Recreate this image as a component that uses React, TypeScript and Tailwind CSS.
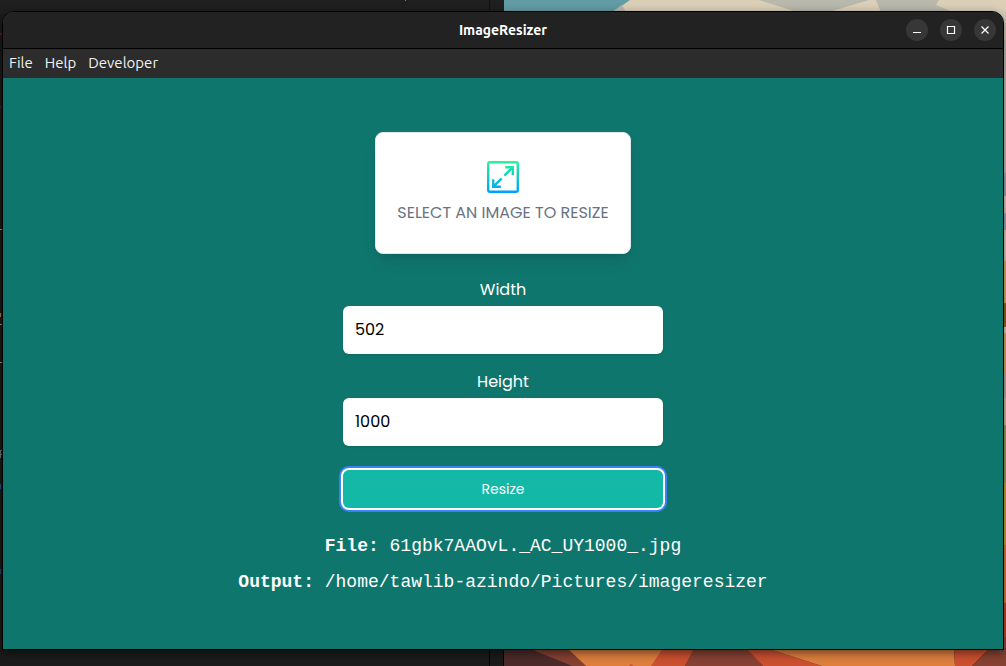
import { useState } from "react";

function Wallpaper() {
  return (
    <svg
      className="absolute inset-0 h-full w-full"
      viewBox="0 0 1006 666"
      preserveAspectRatio="none"
      aria-hidden="true"
    >
      <rect width="1006" height="666" fill="#1b1b1b" />
      <rect width="504" height="14" fill="#1f1f1f" />
      <rect x="481" width="1" height="14" fill="#1f1f1f" />
      <rect x="489" width="1" height="14" fill="#111111" />
      <rect x="405" width="1" height="1" fill="#777777" />
      <rect x="489" y="648" width="1" height="18" fill="#050505" />
      <g>
        <rect y="33" width="2" height="2" fill="#5c1c1c" />
        <rect y="106" width="2" height="2" fill="#3c1c20" />
        <rect y="229" width="2" height="1" fill="#b09078" />
        <rect y="313" width="1" height="4" fill="#c07038" />
        <rect y="324" width="2" height="1" fill="#b09078" />
        <rect y="362" width="2" height="1" fill="#b09078" />
        <path d="M0.5 450V458M0 450.5H2M0 454.5H2" stroke="#657465" />
        <rect y="484" width="1" height="5" fill="#25507c" />
        <rect y="569" width="1" height="5" fill="#1f4570" />
      </g>
      <rect x="504" width="502" height="40" fill="#dbcfb8" />
      <path d="M504 0H630L613 12H504Z" fill="#629ca5" />
      <path d="M622 5L626 12H612Z" fill="#b9b8ad" />
      <path d="M759 0H869L829 12H797Z" fill="#b9b8ad" />
      <path d="M876 0H939L936 5L953 12H881Z" fill="#b9b8ad" />
      <rect x="1003" y="40" width="3" height="133" fill="#c4c3b6" />
      <rect x="1003" y="173" width="3" height="23" fill="#9bb0b2" />
      <rect x="1003" y="196" width="3" height="17" fill="#dbcfb8" />
      <rect x="1003" y="213" width="3" height="17" fill="#9bb0b2" />
      <rect x="1003" y="230" width="3" height="31" fill="#dbcfb8" />
      <rect x="1003" y="261" width="3" height="42" fill="#d9b26a" />
      <rect x="1003" y="303" width="3" height="24" fill="#946524" />
      <rect x="1003" y="327" width="3" height="6" fill="#dbcfb8" />
      <rect x="1003" y="333" width="3" height="40" fill="#d9ab5c" />
      <rect x="1003" y="373" width="3" height="25" fill="#b8b09f" />
      <rect x="1003" y="398" width="3" height="27" fill="#d0c09f" />
      <rect x="1003" y="425" width="3" height="58" fill="#98a15c" />
      <rect x="1003" y="483" width="3" height="62" fill="#c9a32e" />
      <rect x="1003" y="545" width="3" height="58" fill="#de7a38" />
      <rect x="1003" y="603" width="3" height="34" fill="#c4442a" />
      <rect x="1003" y="637" width="3" height="29" fill="#964838" />
      <path d="M504 648H530L572 666H504Z" fill="#4c2a2a" />
      <path d="M528 648H568L586 666H572Z" fill="#864132" />
      <path d="M567 648H664L652 666H586Z" fill="#de7f3e" />
      <path d="M663 648H695L685 666H651Z" fill="#cb5030" />
      <path d="M629 666L631 664L634 666Z" fill="#cb5030" />
      <path d="M694 648H747L763 666H685Z" fill="#864132" />
      <path d="M746 648H766L822 666H763Z" fill="#cb5030" />
      <path d="M766 648H954L955 666H822Z" fill="#de7f3e" />
      <path d="M954 648H990L972 666H955Z" fill="#cb5030" />
      <path d="M990 648H1006V666H972Z" fill="#864132" />
      <rect x="503" y="648" width="1" height="18" fill="#050505" />
    </svg>
  );
}

function ResizeIcon() {
  return (
    <svg className="size-8" viewBox="0 0 32 32" fill="none" aria-hidden="true">
      <defs>
        <linearGradient id="resize" gradientUnits="userSpaceOnUse" x1="16" y1="0" x2="16" y2="32">
          <stop offset="0" stopColor="#2af598" />
          <stop offset="1" stopColor="#009efd" />
        </linearGradient>
      </defs>
      <g stroke="url(#resize)">
        <rect x="1.2" y="1.2" width="29.6" height="29.6" rx="1.8" strokeWidth="2.4" />
        <path d="M18.2 6.2H25.8V14M25.4 6.6L17.3 14.7M6.2 18.2V25.8H13.8M6.6 25.4L14.7 17.3" strokeWidth="2.4" />
      </g>
    </svg>
  );
}

type WindowButtonProps = { label: string; path: string };

function WindowButton({ label, path }: WindowButtonProps) {
  return (
    <button
      type="button"
      aria-label={label}
      className="flex size-[22px] items-center justify-center rounded-full bg-[#373737] text-white"
    >
      <svg
        className="size-[10px]"
        viewBox="0 0 10 10"
        fill="none"
        stroke="currentColor"
        strokeWidth="1.2"
        aria-hidden="true"
      >
        <path d={path} />
      </svg>
    </button>
  );
}

function TitleBar() {
  return (
    <header className="grid h-9 grid-cols-[1fr_auto_1fr] items-center bg-[#222222] px-[7px]">
      <h1 className="col-start-2 font-['Ubuntu','Noto_Sans',sans-serif] text-sm font-semibold text-white">
        ImageResizer
      </h1>
      <div className="flex justify-end gap-3">
        <WindowButton label="Minimize" path="M1 7.5H9" />
        <WindowButton label="Maximize" path="M1.5 1.5H8.5V8.5H1.5Z" />
        <WindowButton label="Close" path="M1.5 1.5L8.5 8.5M8.5 1.5L1.5 8.5" />
      </div>
    </header>
  );
}

function MenuBar() {
  return (
    <nav className="flex h-[30px] items-center gap-3 border-t border-black bg-[#2c2c2c] px-[6px] font-['Ubuntu','Noto_Sans',sans-serif] text-[15px] text-[#f2f2f2]">
      <button type="button">File</button>
      <button type="button">Help</button>
      <button type="button">Developer</button>
    </nav>
  );
}

type NumberFieldProps = {
  id: string;
  label: string;
  value: string;
  onChange: (value: string) => void;
};

function NumberField({ id, label, value, onChange }: NumberFieldProps) {
  return (
    <div className="flex flex-col gap-1">
      <label htmlFor={id} className="text-center text-white">
        {label}
      </label>
      <input
        id={id}
        type="text"
        inputMode="numeric"
        value={value}
        onChange={(event) => onChange(event.target.value)}
        className="h-12 w-full rounded-md bg-white px-3 text-black shadow-sm outline-none"
      />
    </div>
  );
}

export default function App() {
  const [width, setWidth] = useState("502");
  const [height, setHeight] = useState("1000");

  return (
    <div className="relative flex min-h-screen flex-col px-[2px] pt-[11px] pb-4">
      <Wallpaper />
      <div className="relative flex flex-1 flex-col overflow-hidden rounded-t-xl border border-black bg-[#0f766e] shadow-[0_3px_10px_rgba(0,0,0,0.5)]">
        <TitleBar />
        <MenuBar />
        <main className="flex flex-1 flex-col items-center justify-center px-4 font-['Poppins','Inter',sans-serif] text-base">
          <label
            htmlFor="img"
            className="flex w-64 cursor-pointer flex-col items-center gap-2 rounded-lg border border-gray-200 bg-white py-7 shadow-lg"
          >
            <ResizeIcon />
            <span className="whitespace-nowrap text-gray-500">SELECT AN IMAGE TO RESIZE</span>
            <input id="img" type="file" className="sr-only" />
          </label>

          <form className="mt-6 flex w-full max-w-80 flex-col" onSubmit={(event) => event.preventDefault()}>
            <div className="flex flex-col gap-4">
              <NumberField id="width" label="Width" value={width} onChange={setWidth} />
              <NumberField id="height" label="Height" value={height} onChange={setHeight} />
            </div>
            <button
              type="submit"
              className="mt-6 h-[38px] rounded-md bg-[#14b8a6] text-sm text-white ring-2 ring-[#3b82f6] ring-offset-2 ring-offset-white outline-none"
            >
              Resize
            </button>
          </form>

          <div className="mt-6 flex flex-col gap-2 text-center font-['Liberation_Mono',monospace] text-lg leading-7 text-white">
            <p>
              <strong>File: </strong>61gbk7AAOvL._AC_UY1000_.jpg
            </p>
            <p>
              <strong>Output: </strong>/home/tawlib-azindo/Pictures/imageresizer
            </p>
          </div>
        </main>
      </div>
    </div>
  );
}
